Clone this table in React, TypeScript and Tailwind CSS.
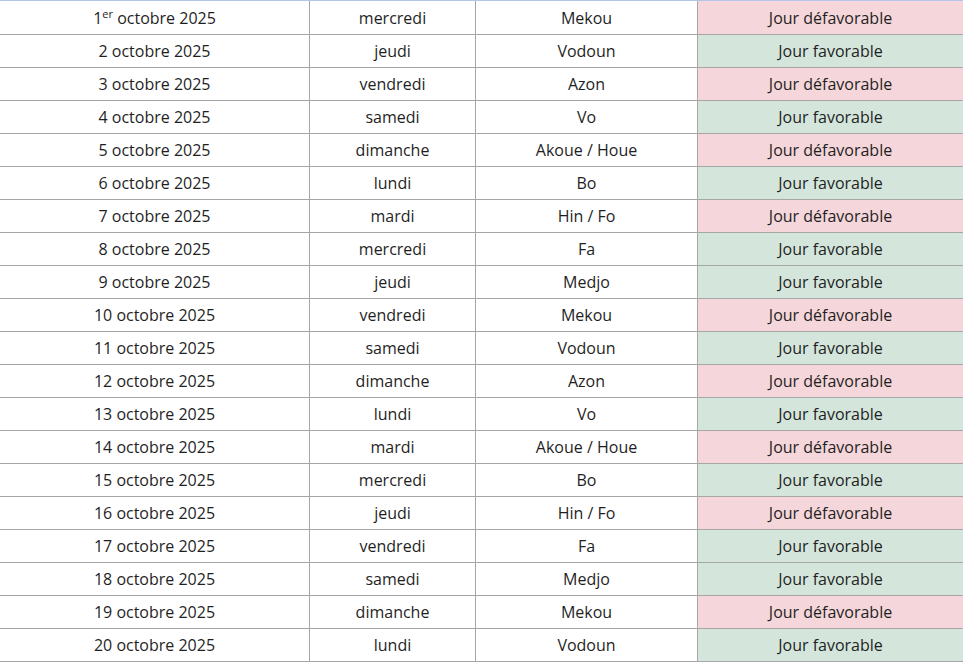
import React from "react";

interface Row {
  day: number;
  weekday: string;
  vodoun: string;
  favorable: boolean;
}

const rows: Row[] = [
  { day: 1, weekday: "mercredi", vodoun: "Mekou", favorable: false },
  { day: 2, weekday: "jeudi", vodoun: "Vodoun", favorable: true },
  { day: 3, weekday: "vendredi", vodoun: "Azon", favorable: false },
  { day: 4, weekday: "samedi", vodoun: "Vo", favorable: true },
  { day: 5, weekday: "dimanche", vodoun: "Akoue / Houe", favorable: false },
  { day: 6, weekday: "lundi", vodoun: "Bo", favorable: true },
  { day: 7, weekday: "mardi", vodoun: "Hin / Fo", favorable: false },
  { day: 8, weekday: "mercredi", vodoun: "Fa", favorable: true },
  { day: 9, weekday: "jeudi", vodoun: "Medjo", favorable: true },
  { day: 10, weekday: "vendredi", vodoun: "Mekou", favorable: false },
  { day: 11, weekday: "samedi", vodoun: "Vodoun", favorable: true },
  { day: 12, weekday: "dimanche", vodoun: "Azon", favorable: false },
  { day: 13, weekday: "lundi", vodoun: "Vo", favorable: true },
  { day: 14, weekday: "mardi", vodoun: "Akoue / Houe", favorable: false },
  { day: 15, weekday: "mercredi", vodoun: "Bo", favorable: true },
  { day: 16, weekday: "jeudi", vodoun: "Hin / Fo", favorable: false },
  { day: 17, weekday: "vendredi", vodoun: "Fa", favorable: true },
  { day: 18, weekday: "samedi", vodoun: "Medjo", favorable: true },
  { day: 19, weekday: "dimanche", vodoun: "Mekou", favorable: false },
  { day: 20, weekday: "lundi", vodoun: "Vodoun", favorable: true },
];

export default function App() {
  return (
    <div className="w-[963px] h-[663px] overflow-hidden bg-white font-['Open_Sans',sans-serif] text-[16px] text-[#1f1f1f]">
      <div className="border-t border-[#b4c6e7]">
        {rows.map((row, index) => (
          <div
            key={row.day}
            className={`grid grid-cols-[310px_166px_222px_265px] border-b border-[#a6a6a6] ${
              index === 0 ? "h-[34px]" : "h-[33px]"
            }`}
          >
            <div className="flex items-center justify-center border-r border-[#a6a6a6]">
              {row.day === 1 ? (
                <span>
                  1<sup className="text-[11px]">er</sup> octobre 2025
                </span>
              ) : (
                <span>{row.day} octobre 2025</span>
              )}
            </div>
            <div className="flex items-center justify-center border-r border-[#a6a6a6]">
              {row.weekday}
            </div>
            <div className="flex items-center justify-center border-r border-[#a6a6a6]">
              {row.vodoun}
            </div>
            <div
              className={`flex items-center justify-center ${
                row.favorable ? "bg-[#d4e6dc]" : "bg-[#f5d6da]"
              }`}
            >
              {row.favorable ? "Jour favorable" : "Jour défavorable"}
            </div>
          </div>
        ))}
      </div>
    </div>
  );
}
